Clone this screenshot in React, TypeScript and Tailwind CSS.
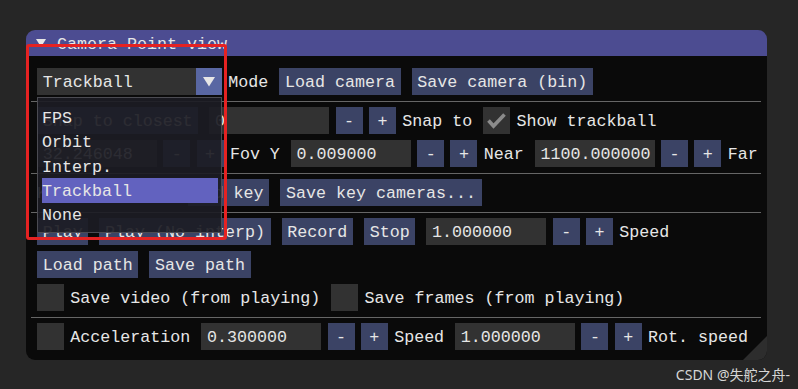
import { ReactNode } from 'react';

const TEXT = "font-['Liberation_Mono',monospace] text-[16.67px] leading-none text-[#e6e6e6]";

function Button({ children }: { children: ReactNode }) {
	return (
		<div className="h-[27px] px-[5.7px] pt-[4px] bg-[#3b4365] flex items-center whitespace-pre shrink-0">
			{children}
		</div>
	);
}

function Small({ children }: { children: ReactNode }) {
	return (
		<div className="w-[27px] h-[27px] pt-[4px] bg-[#3b4365] flex items-center justify-center shrink-0">
			{children}
		</div>
	);
}

function Input({ value }: { value: string }) {
	return (
		<div className="w-[120px] h-[27px] px-[5.7px] pt-[4px] bg-[#323232] flex items-center shrink-0">
			{value}
		</div>
	);
}

function Checkbox({ checked = false }: { checked?: boolean }) {
	return (
		<div className="w-[27px] h-[27px] bg-[#323232] flex items-center justify-center shrink-0">
			{checked && (
				<svg width="27" height="27" viewBox="0 0 27 27">
					<polyline
						points="5.5,13.5 10.5,19 21.5,7.5"
						fill="none"
						stroke="#8b8b8b"
						strokeWidth={3.6}
					/>
				</svg>
			)}
		</div>
	);
}

function Label({ children }: { children: ReactNode }) {
	return <span className="whitespace-pre shrink-0 pt-[4px]">{children}</span>;
}

// input with -/+ steppers and a trailing label
function Stepper({ value, label }: { value: string; label: string }) {
	return (
		<div className="flex items-center gap-[6.3px]">
			<Input value={value} />
			<Small>-</Small>
			<Small>+</Small>
			<Label>{label}</Label>
		</div>
	);
}

function Check({ label, checked }: { label: string; checked?: boolean }) {
	return (
		<div className="flex items-center gap-[6.3px]">
			<Checkbox checked={checked} />
			<Label>{label}</Label>
		</div>
	);
}

function Row({ children }: { children: ReactNode }) {
	return <div className="h-[27px] flex items-center gap-[11px]">{children}</div>;
}

function Separator() {
	return <div className="h-px bg-[#666666] -ml-[6px] -mr-[5px] -mb-px" />;
}

const modes = ['FPS', 'Orbit', 'Interp.', 'Trackball', 'None'];

function ModeCombo() {
	return (
		<div className="relative flex items-center gap-[6.3px]">
			<div className="w-[185px] h-[27px] flex">
				<div className="flex-1 bg-[#323232] px-[5.7px] pt-[4px] flex items-center">Trackball</div>
				<div className="w-[26px] bg-[#5967a3] flex items-center justify-center">
					<svg width="12" height="10" viewBox="0 0 12 10">
						<polygon points="0,0 12,0 6,9.5" fill="#e6e6e6" />
					</svg>
				</div>
			</div>
			<Label>Mode</Label>
			<div className="absolute left-0 top-[29px] z-10 w-[185px] border border-[#4b4b52] bg-[rgba(28,28,36,0.92)] pt-[7px] pb-[5px] pl-[4px] pr-[3px]">
				{modes.map((m) => (
					<div
						key={m}
						className={`h-[24.4px] pt-[4px] flex items-center ${m === 'Trackball' ? 'bg-[#6262bf]' : ''}`}
					>
						{m}
					</div>
				))}
			</div>
		</div>
	);
}

export default function App() {
	return (
		<div className={`relative w-[798px] h-[389px] bg-[#262626] pt-[30px] pl-[26px] flex flex-col ${TEXT}`}>
			<div className="relative w-[741px] rounded-[9px] overflow-hidden">
				<div className="h-[26px] bg-[#4c4c91] flex items-center pl-[10px] gap-[11px]">
					<svg width="10" height="8" viewBox="0 0 10 8">
						<polygon points="0,0 10,0 5,8" fill="#e6e6e6" />
					</svg>
					<span className="pt-[4px]">Camera Point view</span>
				</div>
				<div className="bg-[#0a0a0a] px-[11px] pt-[12px] pb-[10px] flex flex-col gap-[6px]">
					<Row>
						<ModeCombo />
						<Button>Load camera</Button>
						<Button>Save camera (bin)</Button>
					</Row>
					<Separator />
					<Row>
						<Button>Snap to closest</Button>
						<Stepper value="0" label="Snap to" />
						<Check label="Show trackball" checked />
					</Row>
					<Row>
						<Stepper value="32.246048" label="Fov Y" />
						<Stepper value="0.009000" label="Near" />
						<Stepper value="1100.000000" label="Far" />
					</Row>
					<Separator />
					<Row>
						<Label>Key cameras: 0</Label>
						<Button>Add key</Button>
						<Button>Save key cameras...</Button>
					</Row>
					<Separator />
					<Row>
						<Button>Play</Button>
						<Button>Play (No interp)</Button>
						<Button>Record</Button>
						<Button>Stop</Button>
						<Stepper value="1.000000" label="Speed" />
					</Row>
					<Row>
						<Button>Load path</Button>
						<Button>Save path</Button>
					</Row>
					<Row>
						<Check label="Save video (from playing)" />
						<Check label="Save frames (from playing)" />
					</Row>
					<Separator />
					<Row>
						<Check label="Acceleration" />
						<div className="flex items-center gap-[11px]">
							<Stepper value="0.300000" label="Speed" />
							<Stepper value="1.000000" label="Rot. speed" />
						</div>
					</Row>
				</div>
				<svg className="absolute right-0 bottom-0" width="24" height="24" viewBox="0 0 24 24">
					<polygon points="24,0 24,24 0,24" fill="#2d2d2d" />
				</svg>
			</div>
			<div className="self-end mr-[8px] mt-[5px] leading-[19px] text-[14px] text-[#d6d6d6] font-['Noto_Sans','Noto_Sans_CJK_SC',sans-serif]">
				CSDN @失舵之舟-
			</div>
			<div className="absolute left-[25.5px] top-[43.5px] w-[201px] h-[196px] border-[3px] border-[#e52222] rounded-[3px] pointer-events-none" />
		</div>
	);
}
